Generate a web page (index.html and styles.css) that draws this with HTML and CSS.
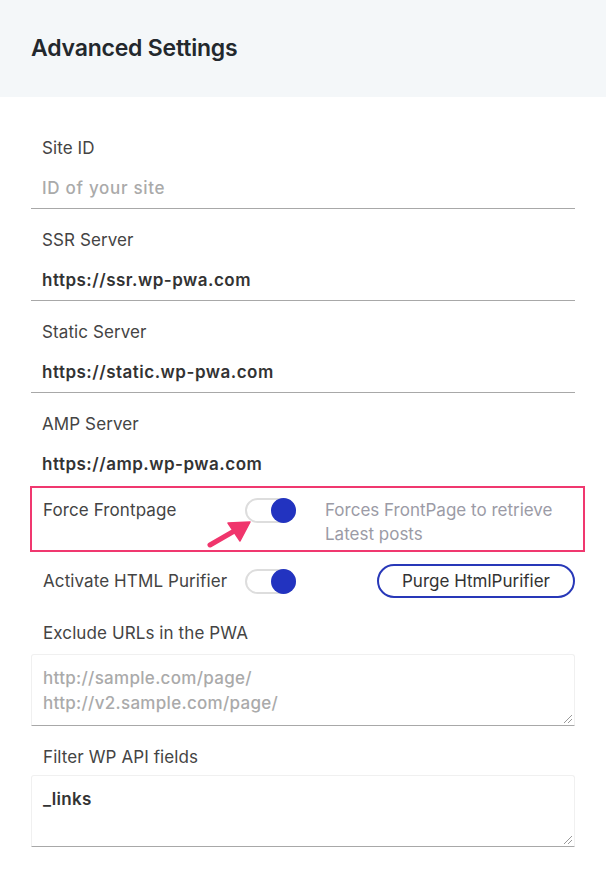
FILE: index.html
```html
<!DOCTYPE html>
<html>
<head>
<meta charset="utf-8">
<link rel="stylesheet" href="styles.css">
</head>
<body>
<div class="header"><h1 class="title">Advanced Settings</h1></div>
<div class="content">
  <div class="field first">
    <div class="label">Site ID</div>
    <div class="input placeholder">ID of your site</div>
  </div>
  <div class="field">
    <div class="label">SSR Server</div>
    <div class="input">https://ssr.wp-pwa.com</div>
  </div>
  <div class="field">
    <div class="label">Static Server</div>
    <div class="input">https://static.wp-pwa.com</div>
  </div>
  <div class="field last">
    <div class="label">AMP Server</div>
    <div class="input">https://amp.wp-pwa.com</div>
  </div>
  <div class="row highlight">
    <div class="row-label">Force Frontpage</div>
    <div class="toggle"><div class="knob"></div></div>
    <div class="desc">Forces FrontPage to retrieve<br>Latest posts</div>
    <svg class="arrow" width="55" height="40" viewBox="0 0 55 40">
      <path d="M8 33 L34 18" stroke="#f0356c" stroke-width="5" stroke-linecap="round"/>
      <path d="M48 10 L26 11 L38 29 Z" fill="#f0356c" stroke="#f0356c" stroke-width="1.5" stroke-linejoin="round"/>
    </svg>
  </div>
  <div class="row purifier">
    <div class="row-label">Activate HTML Purifier</div>
    <div class="toggle"><div class="knob"></div></div>
    <button class="btn">Purge HtmlPurifier</button>
  </div>
  <div class="area-field">
    <div class="label">Exclude URLs in the PWA</div>
    <div class="area placeholder">http://sample.com/page/<br>http://v2.sample.com/page/<span class="grip"></span></div>
  </div>
  <div class="area-field second">
    <div class="label">Filter WP API fields</div>
    <div class="area value">_links<span class="grip"></span></div>
  </div>
</div>
</body>
</html>
```
FILE: styles.css
```css
* { box-sizing: border-box; }
body {
  margin: 0;
  background: #fff;
  font-family: Inter, "Noto Sans", sans-serif;
  color: #444;
}
.header {
  background: #f4f7f9;
  height: 97px;
  display: flex;
  align-items: center;
  padding-left: 31px;
}
.title {
  margin: 0;
  font-size: 23px;
  font-weight: 600;
  color: #23282d;
  letter-spacing: -0.2px;
  padding-bottom: 2px;
}
.content {
  padding: 0 31px;
}
.field {
  border-bottom: 1px solid #a8a8a8;
  padding: 21px 11px 10px 11px;
}
.field.first { padding-top: 41px; }
.field.last { border-bottom: none; padding-bottom: 12px; }
.label {
  font-size: 17px;
  line-height: 20px;
  color: #444;
  letter-spacing: 0.1px;
}
.input {
  margin-top: 20px;
  font-size: 17px;
  line-height: 20px;
  font-weight: 600;
  color: #333;
  letter-spacing: 0.5px;
}
.placeholder { color: #aaa; }
.input.placeholder { font-weight: 500; letter-spacing: 0.7px; }
.row {
  position: relative;
  display: flex;
  align-items: center;
  padding: 0 0 0 12px;
}
.highlight {
  align-items: flex-start;
  border: 2px solid #f0386f;
  margin: 0 -10px 0 -1px;
  height: 66px;
  padding: 10px 10px 0 11px;
}
.row-label {
  width: 202px;
  font-size: 17px;
  line-height: 24px;
  color: #444;
  letter-spacing: 0.1px;
}
.toggle {
  width: 51px;
  height: 25px;
  border: 2px solid #ddd;
  border-radius: 13px;
  background: #fff;
  position: relative;
  flex: none;
}
.knob {
  position: absolute;
  right: -2px;
  top: -2px;
  width: 25px;
  height: 25px;
  border-radius: 50%;
  background: #2233c0;
}
.desc {
  margin-left: 29px;
  font-size: 17px;
  line-height: 24px;
  color: #9b9ba6;
  letter-spacing: 0;
}
.arrow {
  position: absolute;
  left: 170px;
  top: 24px;
}
.purifier {
  margin-top: 12px;
  height: 34px;
}
.btn {
  margin-left: auto;
  height: 34px;
  width: 198px;
  border: 2px solid #2838b8;
  border-radius: 17px;
  background: #fff;
  font-family: inherit;
  font-size: 17px;
  color: #333;
  padding: 0;
}
.area-field { margin-top: 25px; }
.area-field.second { margin-top: 21px; }
.area-field .label {
  padding-left: 12px;
  margin-bottom: 11px;
}
.area-field.second .label { margin-bottom: 8px; }
.area {
  position: relative;
  height: 72px;
  border: 1px solid #f0f0f0;
  border-bottom: 1px solid #a8a8a8;
  border-radius: 3px 3px 0 0;
  padding: 11px 11px 0 11px;
  font-size: 17px;
  line-height: 25px;
  font-weight: 500;
  letter-spacing: 0.3px;
}
.area.value { font-weight: 600; color: #333; }
.grip {
  position: absolute;
  right: 2px;
  bottom: 2px;
  width: 8px;
  height: 8px;
  background: linear-gradient(135deg, transparent 45%, #999 45%, #999 55%, transparent 55%, transparent 70%, #999 70%, #999 80%, transparent 80%);
}
```
